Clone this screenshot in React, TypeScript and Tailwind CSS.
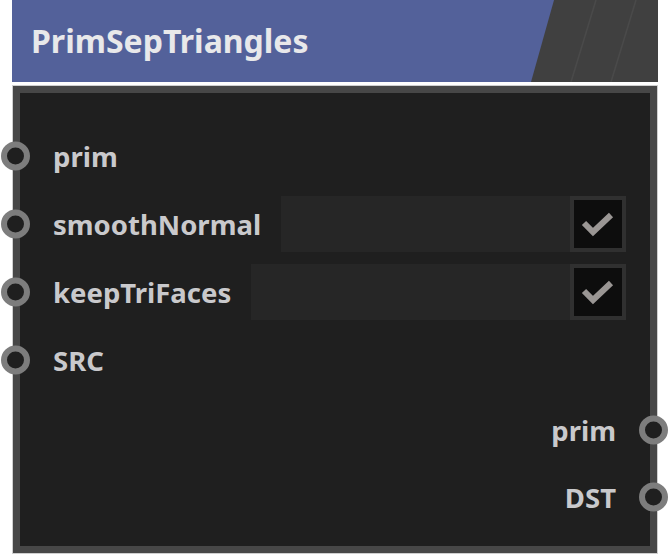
import React from "react";

const font = { fontFamily: '"Noto Sans", "Liberation Sans", sans-serif' };

function Socket({ side }: { side: "left" | "right" }) {
  return (
    <div
      className={
        "absolute top-1/2 -translate-y-1/2 w-[29px] h-[29px] rounded-full border-[6px] border-[#7d7d7d] bg-[#1f1f1f] " +
        (side === "left" ? "left-[-19px]" : "right-[-18px]")
      }
    />
  );
}

function Check() {
  return (
    <div className="w-[56px] h-[56px] border-[4px] border-[#303030] bg-[#0d0d0d] flex items-center justify-center shrink-0">
      <svg width="36" height="30" viewBox="0 0 36 30">
        <polyline points="4,14 13,23 31,6" fill="none" stroke="#9a9694" strokeWidth="6" />
      </svg>
    </div>
  );
}

function InRow({ label, check }: { label: string; check?: boolean }) {
  return (
    <div className="relative h-[56px] flex items-center pl-[33px] pr-[24px] gap-[20px]">
      <Socket side="left" />
      <span className="text-[27.5px] font-bold text-[#c9c9cc] leading-none whitespace-nowrap pt-[2px]">{label}</span>
      {check && (
        <div className="flex-1 flex h-[56px]">
          <div className="flex-1 bg-[#262626]" />
          <Check />
        </div>
      )}
    </div>
  );
}

function OutRow({ label }: { label: string }) {
  return (
    <div className="relative h-[56px] flex items-center justify-end pr-[34px]">
      <Socket side="right" />
      <span className="text-[27.5px] font-bold text-[#c9c9cc] leading-none pt-[2px]">{label}</span>
    </div>
  );
}

export default function App() {
  return (
    <div className="w-[671px] h-[555px] bg-white relative overflow-hidden" style={font}>
      <div className="ml-[12px] w-[646px]">
        <div className="relative h-[82px] bg-[#404040] overflow-hidden">
          <svg className="absolute inset-0" width="646" height="82" viewBox="0 0 646 82">
            <line x1="584" y1="0" x2="559" y2="82" stroke="#4a4a4a" strokeWidth="1.5" />
            <line x1="624" y1="0" x2="599" y2="82" stroke="#4a4a4a" strokeWidth="1.5" />
          </svg>
          <div className="absolute inset-0 bg-[#53619a] [clip-path:polygon(0_0,542px_0,519px_100%,0_100%)]" />
          <div className="relative h-full flex items-center pl-[19px]">
            <span className="text-[32px] font-bold text-[#e8e8ea] leading-none">PrimSepTriangles</span>
          </div>
        </div>
        <div className="mt-[3px] h-[469px] border border-[#cfcfcf]">
          <div className="h-full border-[7px] border-[#474747] bg-[#1f1f1f] pt-[35px] flex flex-col gap-[12px]">
            <InRow label="prim" />
            <InRow label="smoothNormal" check />
            <InRow label="keepTriFaces" check />
            <InRow label="SRC" />
            <div className="flex flex-col gap-[11px] mt-[2px]">
              <OutRow label="prim" />
              <OutRow label="DST" />
            </div>
          </div>
        </div>
      </div>
    </div>
  );
}
